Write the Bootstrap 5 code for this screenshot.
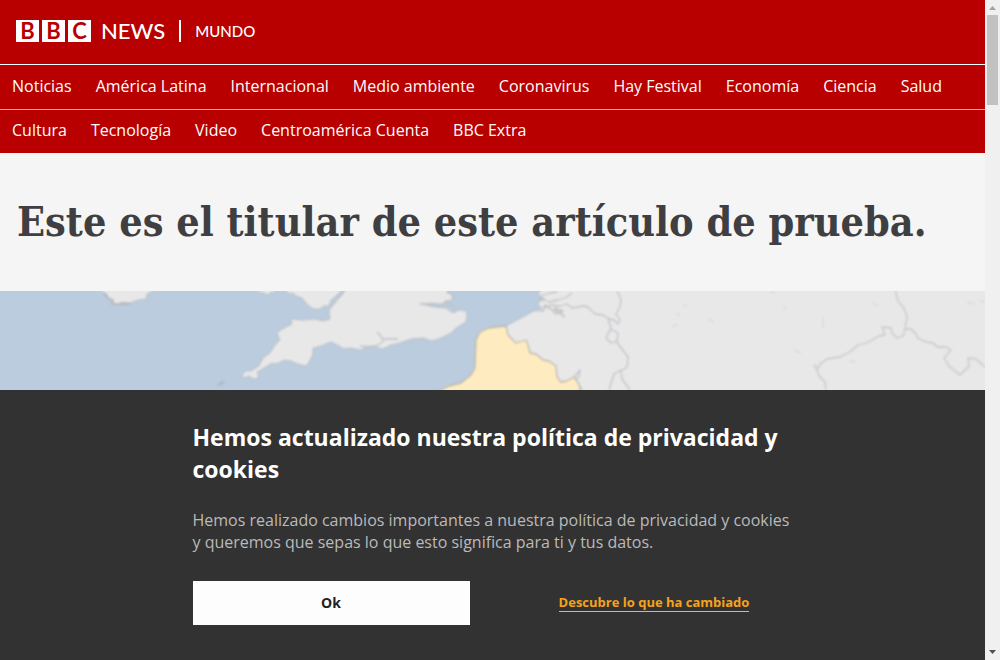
<!DOCTYPE html>
<html lang="es">
<head>
<meta charset="utf-8">
<meta name="viewport" content="width=device-width, initial-scale=1">
<title>Este es el titular de este artículo de prueba. - BBC News Mundo</title>
<link href="https://cdn.jsdelivr.net/npm/bootstrap@5.3.0/dist/css/bootstrap.min.css" rel="stylesheet">
<style>
body { font-family: "Open Sans", "Noto Sans", sans-serif; font-size: 16px; background: #f5f5f5; }
.bbc-red { background: #b80000; color: #fff; }
.masthead { height: 64px; padding: 0 16px 2px; }
.brand-link { font-family: Lato, sans-serif; line-height: 22px; }
.brand-blocks { gap: 3px; }
.brand-block { width: 23px; height: 22px; background: #fff; color: #b80000; font-size: 22px; font-weight: 700; text-align: center; }
.brand-news { font-size: 22px; font-weight: 500; margin-left: 10px; }
.brand-service { font-size: 15px; font-weight: 500; margin-left: 14px; padding-left: 14px; border-left: 2px solid #fff; }
.section-nav { border-top: 1px solid #fff; }
.section-nav ul { background: linear-gradient(#eba9a9, #eba9a9) 0 44px / 100% 1px no-repeat; }
.section-nav a { display: block; padding: 0 12px; height: 44px; line-height: 42px; font-size: 16px; color: #fdfdfd; text-decoration: none; }
.headline { font-family: "DejaVu Serif Condensed", "DejaVu Serif", serif; font-stretch: condensed; font-size: 41px; line-height: 48px; font-weight: 700; color: #3f3f42; padding: 45px 17px; margin: 0; }
.map-figure { background: #bbccde; min-height: 0; }
.map-figure svg { width: 100%; height: 100%; }
.privacy { background: #323232; padding: 31px 16px 35px; }
.privacy-inner { max-width: 600px; }
.privacy h2 { font-size: 23px; line-height: 32px; font-weight: 700; color: #fff; margin-bottom: 24px; }
.privacy p { font-size: 16px; line-height: 22px; color: #bababa; margin-bottom: 28px; }
.privacy-actions { gap: 46px; }
.privacy-actions button { height: 44px; background: #fdfdfd; color: #222; border: 0; border-radius: 0; font-size: 14px; font-weight: 700; }
.privacy-actions a { font-size: 13px; line-height: 17px; font-weight: 700; color: #f6a21d; text-decoration: none; border-bottom: 1px solid #bababa; }
.scroll-track { width: 15px; background: #f0f0f0; padding: 5px 2px; }
.scroll-thumb { height: 90px; background: #c1c1c1; margin-top: 5px; }
</style>
</head>
<body>
<div class="d-flex vh-100 overflow-hidden">
  <div class="d-flex flex-column flex-grow-1 overflow-hidden">
    <header class="bbc-red">
      <div class="masthead d-flex align-items-center">
        <a class="brand-link d-flex text-white text-decoration-none" href="#" aria-label="BBC News Mundo">
          <span class="brand-blocks d-flex"><span class="brand-block">B</span><span class="brand-block">B</span><span class="brand-block">C</span></span>
          <span class="brand-news">NEWS</span>
          <span class="brand-service">MUNDO</span>
        </a>
      </div>
      <nav class="section-nav" aria-label="Secciones">
        <ul class="d-flex flex-wrap list-unstyled mb-0">
          <li><a href="#">Noticias</a></li>
          <li><a href="#">América Latina</a></li>
          <li><a href="#">Internacional</a></li>
          <li><a href="#">Medio ambiente</a></li>
          <li><a href="#">Coronavirus</a></li>
          <li><a href="#">Hay Festival</a></li>
          <li><a href="#">Economía</a></li>
          <li><a href="#">Ciencia</a></li>
          <li><a href="#">Salud</a></li>
          <li><a href="#">Cultura</a></li>
          <li><a href="#">Tecnología</a></li>
          <li><a href="#">Video</a></li>
          <li><a href="#">Centroamérica Cuenta</a></li>
          <li><a href="#">BBC Extra</a></li>
        </ul>
      </nav>
    </header>
    <main class="d-flex flex-column flex-grow-1 overflow-hidden">
      <h1 class="headline">Este es el titular de este artículo de prueba.</h1>
      <figure class="map-figure flex-grow-1 mb-0">
        <svg class="d-block" viewBox="0 0 985 99" preserveAspectRatio="xMidYMin slice" role="img" aria-label="Mapa del norte de Francia">
          <defs>
            <filter id="soft" x="-10" y="-10" width="1005" height="119" filterUnits="userSpaceOnUse"><feGaussianBlur stdDeviation="0.8"/></filter>
          </defs>
          <rect width="985" height="99" fill="#bbccde"/>
          <g filter="url(#soft)" stroke-linejoin="round">
            <g fill="#e8e8e9" stroke="#b9bfc4" stroke-width="1">
              <path d="M98-4L103 1 107 3 109 8 113 9 112 12 119 13 122 11 130 12 138 9 146 8 147 3 153 0V-4Z"/>
              <path d="M252-4L259 1 264 2 268 4 271 1 275 2V-4M284-4L289 3 293 2 296 5 302 7 307 13 313 18 320 18 324 15 329 15 331 9 337 4 345-4"/>
              <path d="M347-4L342 4 334 12 329 20 330 28 323 30 315 28 302 29 293 28 291 29 292 33 282 38 277 42 280 49 275 54 270 62 263 67 259 75 251 80 246 80 242 84 244 87 249 85 254 88 259 86 257 81 264 77 272 72 276 73 285 69 291 70 298 73 306 75 309 71 313 63 313 57 321 55 331 51 339 55 344 58 350 57 361 59 369 55 377 56 382 58 391 54 400 52 411 48 423 47 432 50 441 47 451 42 456 37 466 31 467 24 466 20 459 19 453 22 446 17 434 16 421 13 433 12 442 15 445 10 452 9 453 3 447 2 449-4Z"/>
              <path d="M542-4L538 4 545 8 537 12 542 17 532 21 521 27 506 35 500 105H995V-4Z"/>
            </g>
            <path d="M104 3L109 8 113 9 112 13 122 13 130 13" fill="none" stroke="#b4b9bd" stroke-width="2"/>
            <path d="M430 104L441 99 449 95 461 92 471 84 475 77 476 49 480 41 489 37 506 35 508 44 513 49 516 52 526 49 528 54 530 62 536 63 543 69 549 70 556 75 557 86 561 91 567 90 574 86 579 93 581 104Z" fill="#ffebc0" stroke="#b9b5ac" stroke-width="1.3"/>
            <g fill="none" stroke="#c0c1c4" stroke-width="1.3">
              <path d="M345-2L333 14M377 41L383 48 398 48M384 49L380 53 370 56 360 55M420 13L450 13 457 20M450 2L455 8M540 5L550 2 557 1M538 7L549 11 558 9 565 7 572 2M543 18L551 14 560 15 567 13 572 17 583 15 588 16 595 23 603 24 609 28 614 29 618 33 620 29 616 23 620 16 621 8 617 0"/>
              <path stroke-width="1.700" d="M535 19L543 20 545 14 551 18 556 23 563 20 554 17M554 18L565 26"/>
              <path d="M608 28L611 37 606 47 611 52 617 50 618 42 610 38M616 50L621 57 628 66 627 76 621 80 622 88 630 99M621 79L614 83 609 99M574 86L580 79 579 86 576 88 582 99"/>
              <path stroke="#cdcece" stroke-width="1.8" d="M895-2L898 10 904 17 907 26 905 38 911 38 916 43 918 47 926 51 933 52 937 56 946 56 951 59 944 67 949 75 960 84 969 75 968 67 976 68 985 76M905 38L903 45 897 47 892 42 891 37 882 36 885 44 879 45 872 49 866 52 858 54 850 61 840 66 827 68 820 73 817 79 814 73M817 79L819 85 825 91 826 99"/>
            </g>
            <g stroke="#dcddde" stroke-width="2" fill="none">
              <path d="M672 36L678 33M683 14L687 15M677 22L680 25M709 29L714 30M770 0L775 2M823 26V38M783 16L787 17M794 59L801 62M849 70L856 71M873 12L878 15M967 12L975 12M980 10L985 11"/>
            </g>
            <path d="M217 94L222 90 225 92 219 95Z" fill="#abb8c5"/>
          </g>
        </svg>
      </figure>
    </main>
    <section class="privacy" aria-labelledby="privacy-title">
      <div class="privacy-inner mx-auto">
        <h2 id="privacy-title">Hemos actualizado nuestra política de privacidad y cookies</h2>
        <p>Hemos realizado cambios importantes a nuestra política de privacidad y cookies y queremos que sepas lo que esto significa para ti y tus datos.</p>
        <div class="privacy-actions d-flex align-items-center">
          <button class="btn col px-0 pt-1" type="button">Ok</button>
          <div class="col d-flex justify-content-center"><a href="#">Descubre lo que ha cambiado</a></div>
        </div>
      </div>
    </section>
  </div>
  <div class="scroll-track d-flex flex-column flex-shrink-0" aria-hidden="true">
    <svg class="mx-auto flex-shrink-0" width="7" height="5" viewBox="0 0 7 5"><path d="M0 5L3.500 1 7 5Z" fill="#a3a3a3"/></svg>
    <div class="scroll-thumb flex-shrink-0"></div>
    <svg class="mx-auto mt-auto flex-shrink-0" width="7" height="5" viewBox="0 0 7 5"><path d="M0 0L3.500 4 7 0Z" fill="#505050"/></svg>
  </div>
</div>
<script src="https://cdn.jsdelivr.net/npm/bootstrap@5.3.0/dist/js/bootstrap.bundle.min.js"></script>
</body>
</html>
